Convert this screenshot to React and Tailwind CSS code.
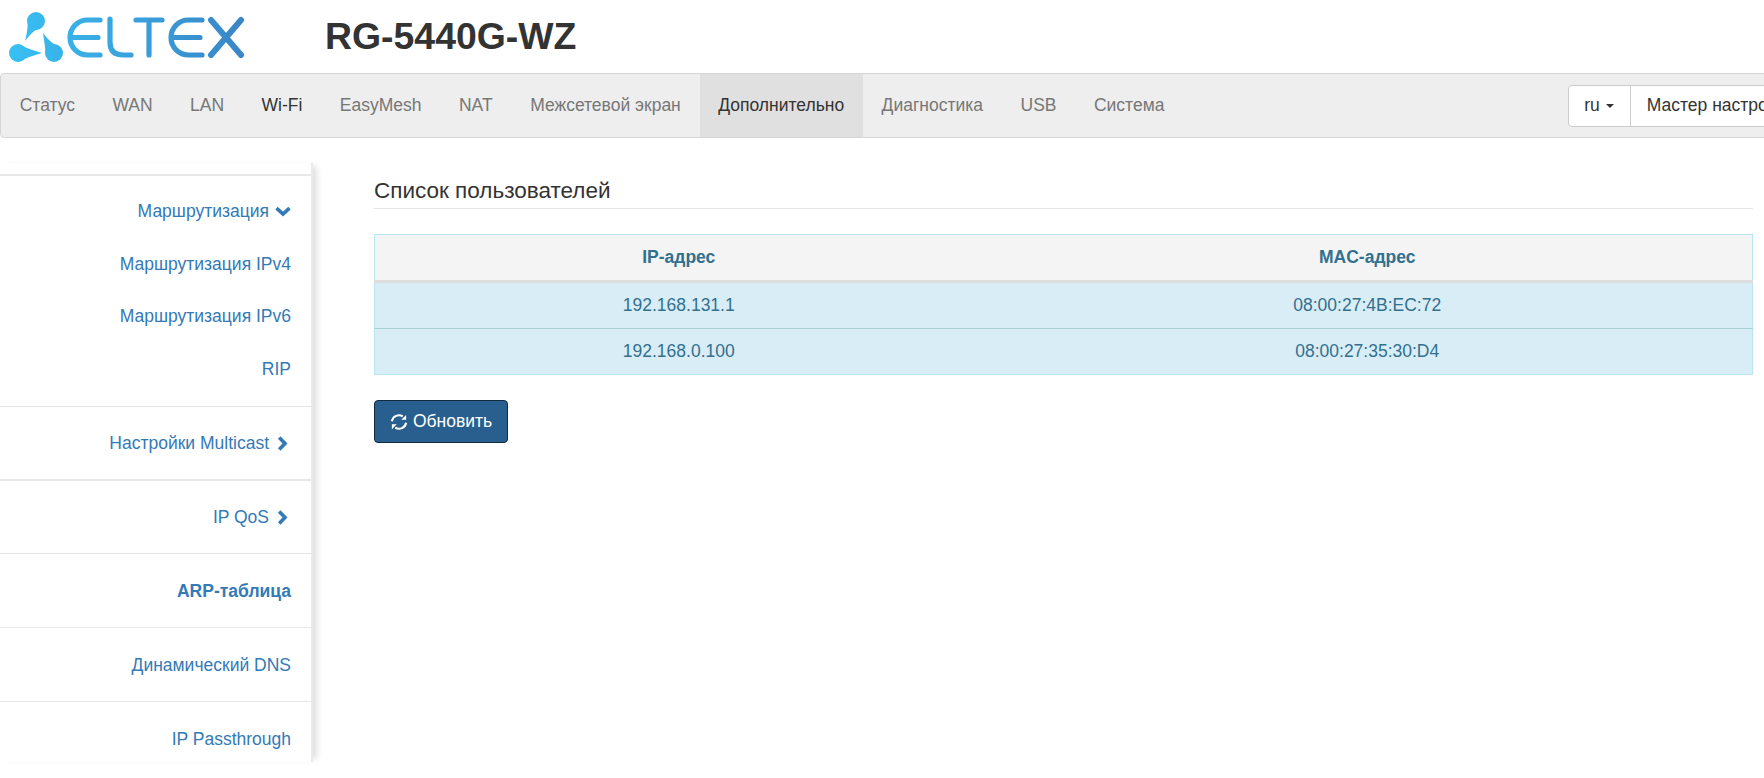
import React from 'react';

const navItems = ['Статус', 'WAN', 'LAN', 'Wi-Fi', 'EasyMesh', 'NAT', 'Межсетевой экран', 'Дополнительно', 'Диагностика', 'USB', 'Система'];

const Logo = () => (
    <svg width="250" height="70" viewBox="0 0 250 70" className="block shrink-0">
        <defs>
            <linearGradient id="eltexGrad" gradientUnits="userSpaceOnUse" x1="10" y1="0" x2="244" y2="0">
                <stop offset="0" stopColor="#38c0f3" />
                <stop offset="1" stopColor="#3a85c6" />
            </linearGradient>
        </defs>
        <g fill="url(#eltexGrad)">
            <circle cx="36" cy="19" r="9" />
            <path d="M44 23 Q33 28 25 39 Q28 28 28 15 Z" />
            <circle cx="18" cy="51" r="9" />
            <path d="M18 42 Q30 48 42 51 Q30 54 18 60 Z" />
            <circle cx="54" cy="51" r="9" />
            <path d="M62 47 Q50 41 43 31 Q45 43 46 55 Z" />
        </g>
        <g fill="none" stroke="url(#eltexGrad)" strokeWidth="5.2" strokeLinecap="round" strokeLinejoin="round">
            <path d="M100 18 H87.5 A17.5 17.5 0 0 0 87.5 53 H100 M72 35.5 H98" />
            <path d="M110 17 V40 Q110 53 123 53 H131" />
            <path d="M136 18 H162 M149 18 V53" />
            <path d="M202 18 H188.5 A17.5 17.5 0 0 0 188.5 53 H202 M173 35.5 H200" />
            <path d="M211 18 L241 53 M241 18 L211 53" strokeWidth="6" />
        </g>
    </svg>
);

const RefreshIcon = () => (
    <svg width="18" height="18" viewBox="0 0 24 24" className="shrink-0">
        <path d="M2.5 11 A9.5 9.5 0 0 1 17 4.5" fill="none" stroke="#fff" strokeWidth="2.8" />
        <polygon points="21.5,2.5 21.5,9 15,9" fill="#fff" />
        <path d="M21.5 13 A9.5 9.5 0 0 1 7 19.5" fill="none" stroke="#fff" strokeWidth="2.8" />
        <polygon points="2.5,21.5 2.5,15 9,15" fill="#fff" />
    </svg>
);

const ChevronRight = () => (
    <svg width="11" height="15" viewBox="0 0 11 15" className="inline-block ml-[8px] mr-[3px] align-[-2px]">
        <path d="M2.2 1.5 L8 7.5 L2.2 13.5" fill="none" stroke="#337ab7" strokeWidth="3.6" />
    </svg>
);

const ChevronDown = () => (
    <svg width="16" height="11" viewBox="0 0 16 11" className="inline-block ml-[6px] align-[0px]">
        <path d="M1.5 2.2 L8 8 L14.5 2.2" fill="none" stroke="#337ab7" strokeWidth="3.6" />
    </svg>
);

const SideLink = ({ children, bold }) => (
    <a className={`block text-right pr-[20px] text-[#337ab7] ${bold ? 'font-bold' : ''}`}>{children}</a>
);

const Sidebar = () => (
    <aside className="w-[313px] h-[599px] shrink-0 mt-[25px] pt-[11px] bg-white shadow-[7px_0_6px_-3px_rgba(0,0,0,0.12)] border-r-2 border-[#eaeaea]">
        <div className="border-t-2 border-[#e7e7e7]">
            <div className="pt-[22px] pb-[24px] flex flex-col gap-[26.4px]">
                <SideLink>Маршрутизация<ChevronDown /></SideLink>
                <SideLink>Маршрутизация IPv4</SideLink>
                <SideLink>Маршрутизация IPv6</SideLink>
                <SideLink>RIP</SideLink>
            </div>
        </div>
        <div className="border-t border-[#e7e7e7] h-[73px] flex flex-col justify-center">
            <SideLink>Настройки Multicast<ChevronRight /></SideLink>
        </div>
        <div className="border-t-2 border-[#e7e7e7] h-[74px] flex flex-col justify-center">
            <SideLink>IP QoS<ChevronRight /></SideLink>
        </div>
        <div className="border-t border-[#e7e7e7] h-[74px] flex flex-col justify-center">
            <SideLink bold>ARP-таблица</SideLink>
        </div>
        <div className="border-t border-[#e7e7e7] h-[74px] flex flex-col justify-center">
            <SideLink>Динамический DNS</SideLink>
        </div>
        <div className="border-t border-[#e7e7e7] h-[74px] flex flex-col justify-center">
            <SideLink>IP Passthrough</SideLink>
        </div>
    </aside>
);

const rows = [
    ['192.168.131.1', '08:00:27:4B:EC:72'],
    ['192.168.0.100', '08:00:27:35:30:D4'],
];

const ArpTable = () => (
    <table className="w-full border-collapse border border-[#b7e6f0] table-fixed">
        <thead>
            <tr className="bg-[#f4f4f4] text-[#31708f]">
                <th className="w-[608px] h-[47px] border-b-[3px] border-[#dddddd] font-bold text-center">IP-адрес</th>
                <th className="h-[47px] border-b-[3px] border-[#dddddd] font-bold text-center">MAC-адрес</th>
            </tr>
        </thead>
        <tbody>
            {rows.map((r, i) => (
                <tr key={r[0]} className={`bg-[#d9edf6] text-[#31708f] ${i > 0 ? 'border-t border-[#a9cfd6] h-[46px]' : 'h-[47px]'}`}>
                    <td className="text-center">{r[0]}</td>
                    <td className="text-center">{r[1]}</td>
                </tr>
            ))}
        </tbody>
    </table>
);

export default function App() {
    return (
        <div className="h-screen overflow-hidden bg-white text-[17.5px] text-[#333] font-['Liberation_Sans',Arial,sans-serif]">
            {/* Шапка */}
            <header className="flex items-center h-[73px]">
                <Logo />
                <h1 className="ml-[75px] text-[37.4px] leading-none font-bold text-[#333]">RG-5440G-WZ</h1>
            </header>

            {/* Меню */}
            <nav className="flex items-stretch w-[1820px] h-[65px] bg-[#eeeeee] border border-[#d6d6d6] rounded-[4px]">
                {navItems.map((item) => (
                    <a
                        key={item}
                        className={`flex items-center px-[18.72px] ${item === 'Дополнительно' ? 'bg-[#e0e0e0] text-[#333]' : item === 'Wi-Fi' ? 'text-[#333]' : 'text-[#777]'}`}
                    >
                        {item}
                    </a>
                ))}
                <div className="ml-auto mr-[7px] self-center flex h-[42px] bg-white border border-[#cccccc] rounded-[4px]">
                    <button className="flex items-center pl-[15px] pr-[16px] border-r border-[#cccccc]">
                        ru
                        <span className="ml-[6px] border-x-[4.5px] border-x-transparent border-t-[4.5px] border-t-[#333]"></span>
                    </button>
                    <button className="flex items-center px-[16px] whitespace-nowrap">Мастер настройки</button>
                </div>
            </nav>

            <div className="flex">
                <Sidebar />
                <main className="flex-1 ml-[61px] mr-[11px] pt-[38px]">
                    <h2 className="text-[22.5px] leading-[30px] pb-[2px] border-b border-[#e5e5e5]">Список пользователей</h2>
                    <div className="mt-[25px]">
                        <ArpTable />
                    </div>
                    <button className="mt-[25px] w-[134px] h-[43px] flex items-center justify-center gap-[5px] bg-[#285f8f] border border-[#122b40] rounded-[4px] text-white">
                        <RefreshIcon />
                        Обновить
                    </button>
                </main>
            </div>
        </div>
    );
}
